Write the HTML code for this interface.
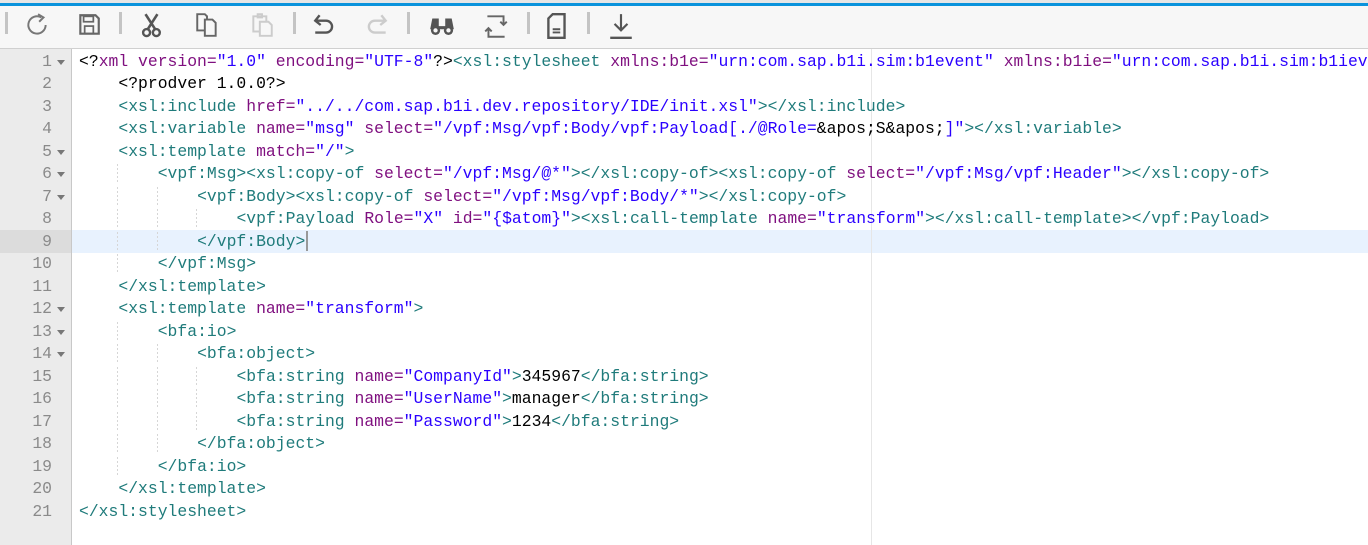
<!DOCTYPE html>
<html><head><meta charset="utf-8">
<style>
html,body{margin:0;padding:0;width:1368px;height:545px;overflow:hidden;background:#fff;font-family:"Liberation Sans",sans-serif}
#tb{position:absolute;left:0;top:0;width:1368px;height:48px;background:#f7f7f7;border-bottom:1px solid #d0d0d0}
#tb .blue{position:absolute;left:0;top:3px;width:1368px;height:3px;background:#0a93dc}
#tb .top{position:absolute;left:0;top:0;width:1368px;height:3px;background:#e6e6e6}
.sep{position:absolute;top:12px;width:3px;height:22px;background:#c4c4c4}
.ic{position:absolute;top:12px}
#gut{position:absolute;left:0;top:49px;width:71px;height:496px;background:#ebebeb;border-right:1px solid #c8c8c8}
.pm{position:absolute;left:871px;top:49px;width:1px;height:496px;background:#e6e6e6}
.ln,.cl{position:absolute;height:22.5px;line-height:22.5px;font-family:"Liberation Mono",monospace;font-size:16.4px;white-space:pre}
.ln{left:0;width:52px;text-align:right;color:#8a8a8a}
.fold{position:absolute;left:57px;width:0;height:0;border-left:4px solid transparent;border-right:4px solid transparent;border-top:5px solid #777}
.cl{left:79px;color:#000}
.t{color:#1f7b7b}.a{color:#7f0f7f}.s{color:#2a00ff}
i{font-style:normal;background:repeating-linear-gradient(to bottom,#d6d6d6 0 2px,transparent 2px 4px) right/1px 100% no-repeat}
i.n{background:none}
</style></head><body>
<div id="tb">
<div class="top"></div><div class="blue"></div>
<div class="sep" style="left:5px"></div>
<div class="sep" style="left:119px"></div>
<div class="sep" style="left:293px"></div>
<div class="sep" style="left:407px"></div>
<div class="sep" style="left:527px"></div>
<div class="sep" style="left:587px"></div>
<svg class="ic" style="left:25px" width="24" height="26" viewBox="0 0 22 24"><path d="M15 5 A8 8 0 1 0 19 12" fill="none" stroke="#777" stroke-width="1.8"/><path d="M12 2 L17 5 L13 9" fill="none" stroke="#777" stroke-width="1.8"/></svg>
<svg class="ic" style="left:77px" width="24" height="26" viewBox="0 0 22 24"><path d="M3 3 H17 L20 6 V20 H3 Z" fill="none" stroke="#666" stroke-width="2"/><rect x="6" y="4" width="9" height="5" fill="none" stroke="#666" stroke-width="1.6"/><rect x="7" y="13" width="8" height="7" fill="none" stroke="#666" stroke-width="1.6"/></svg>
<svg class="ic" style="left:139px" width="26" height="26" viewBox="0 0 24 24"><path d="M6 2 L15 16 M17 2 L8 16" stroke="#555" stroke-width="2.4"/><circle cx="7" cy="19" r="3.2" fill="none" stroke="#555" stroke-width="2.2"/><circle cx="16" cy="19" r="3.2" fill="none" stroke="#555" stroke-width="2.2"/></svg>
<svg class="ic" style="left:194px" width="26" height="26" viewBox="0 0 24 24"><path d="M3 2 H10 L12 4 V17 H3 Z" fill="none" stroke="#666" stroke-width="1.8"/><path d="M10 7 H17 L20 10 V22 H10 Z" fill="#f7f7f7" stroke="#666" stroke-width="1.8"/></svg>
<svg class="ic" style="left:249px" width="26" height="26" viewBox="0 0 24 24"><path d="M4 4 H16 V18 H4 Z M8 2 H12 V5 H8 Z" fill="none" stroke="#ccc" stroke-width="1.8"/><path d="M10 9 H18 L21 12 V22 H10 Z" fill="#f7f7f7" stroke="#ccc" stroke-width="1.8"/></svg>
<svg class="ic" style="left:312px" width="26" height="26" viewBox="0 0 24 24"><path d="M7 3 L3 8 L8 12" fill="none" stroke="#555" stroke-width="2.2"/><path d="M3 8 H13 A5.5 5.5 0 0 1 13 19 H3" fill="none" stroke="#555" stroke-width="2.2"/></svg>
<svg class="ic" style="left:364px" width="26" height="26" viewBox="0 0 24 24"><path d="M16 3 L20 8 L15 12" fill="none" stroke="#ccc" stroke-width="2.2"/><path d="M20 8 H10 A5.5 5.5 0 0 0 10 19 H20" fill="none" stroke="#ccc" stroke-width="2.2"/></svg>
<svg class="ic" style="left:428px" width="28" height="26" viewBox="0 0 26 24"><path d="M4 6 H10 V13 H16 V6 H22 L24 16 H2 Z" fill="#555"/><circle cx="7" cy="17" r="4.3" fill="#555"/><circle cx="19" cy="17" r="4.3" fill="#555"/><circle cx="7" cy="17" r="2" fill="#f7f7f7"/><circle cx="19" cy="17" r="2" fill="#f7f7f7"/></svg>
<svg class="ic" style="left:482px" width="28" height="28" viewBox="0 0 26 26"><path d="M5 4 H20 V12 M17 9 L20 12 L23 9" fill="none" stroke="#666" stroke-width="1.8"/><path d="M21 23 H6 V15 M3 18 L6 15 L9 18" fill="none" stroke="#666" stroke-width="1.8"/></svg>
<svg class="ic" style="left:545px" width="24" height="28" viewBox="0 0 22 26"><path d="M7 2 H18 V24 H3 V6 Z" fill="none" stroke="#555" stroke-width="2.2"/><path d="M7 16 H14 M7 19 H14" stroke="#555" stroke-width="1.8"/></svg>
<svg class="ic" style="left:608px" width="26" height="28" viewBox="0 0 24 26"><path d="M12 2 V17 M6 11 L12 17 L18 11" fill="none" stroke="#555" stroke-width="2"/><path d="M2 24 H22" stroke="#555" stroke-width="2.2"/></svg>
</div>
<div id="gut"></div>
<div style="position:absolute;left:0;top:230px;width:71px;height:22.5px;background:#dcdcdc"></div>
<div style="position:absolute;left:72px;top:230px;width:1296px;height:22.5px;background:#e8f2fe"></div>
<div class="pm"></div>
<div style="position:absolute;left:306px;top:231px;width:2px;height:20px;background:#999"></div>
<div style="position:absolute;left:0;top:50.5px">
<div class="ln" style="top:0">1</div><div class="fold" style="top:9px"></div>
<div class="ln" style="top:22.5px">2</div>
<div class="ln" style="top:45px">3</div>
<div class="ln" style="top:67.5px">4</div>
<div class="ln" style="top:90px">5</div><div class="fold" style="top:99px"></div>
<div class="ln" style="top:112.5px">6</div><div class="fold" style="top:121.5px"></div>
<div class="ln" style="top:135px">7</div><div class="fold" style="top:144px"></div>
<div class="ln" style="top:157.5px">8</div>
<div class="ln" style="top:180px">9</div>
<div class="ln" style="top:202.5px">10</div>
<div class="ln" style="top:225px">11</div>
<div class="ln" style="top:247.5px">12</div><div class="fold" style="top:256.5px"></div>
<div class="ln" style="top:270px">13</div><div class="fold" style="top:279px"></div>
<div class="ln" style="top:292.5px">14</div><div class="fold" style="top:301.5px"></div>
<div class="ln" style="top:315px">15</div>
<div class="ln" style="top:337.5px">16</div>
<div class="ln" style="top:360px">17</div>
<div class="ln" style="top:382.5px">18</div>
<div class="ln" style="top:405px">19</div>
<div class="ln" style="top:427.5px">20</div>
<div class="ln" style="top:450px">21</div>

<div class="cl" style="top:0">&lt;?<span class="a">xml version=</span><span class="s">"1.0"</span> <span class="a">encoding=</span><span class="s">"UTF-8"</span>?&gt;<span class="t">&lt;xsl:stylesheet</span> <span class="a">xmlns:b1e=</span><span class="s">"urn:com.sap.b1i.sim:b1event"</span> <span class="a">xmlns:b1ie=</span><span class="s">"urn:com.sap.b1i.sim:b1ievent"</span></div>
<div class="cl" style="top:22.5px"><i class="n">    </i>&lt;?prodver 1.0.0?&gt;</div>
<div class="cl" style="top:45px"><i class="n">    </i><span class="t">&lt;xsl:include</span> <span class="a">href=</span><span class="s">"../../com.sap.b1i.dev.repository/IDE/init.xsl"</span><span class="t">&gt;&lt;/xsl:include&gt;</span></div>
<div class="cl" style="top:67.5px"><i class="n">    </i><span class="t">&lt;xsl:variable</span> <span class="a">name=</span><span class="s">"msg"</span> <span class="a">select=</span><span class="s">"/vpf:Msg/vpf:Body/vpf:Payload[./@Role=</span>&amp;apos;S&amp;apos;<span class="s">]"</span><span class="t">&gt;&lt;/xsl:variable&gt;</span></div>
<div class="cl" style="top:90px"><i class="n">    </i><span class="t">&lt;xsl:template</span> <span class="a">match=</span><span class="s">"/"</span><span class="t">&gt;</span></div>
<div class="cl" style="top:112.5px"><i>    </i><i class="n">    </i><span class="t">&lt;vpf:Msg&gt;&lt;xsl:copy-of</span> <span class="a">select=</span><span class="s">"/vpf:Msg/@*"</span><span class="t">&gt;&lt;/xsl:copy-of&gt;&lt;xsl:copy-of</span> <span class="a">select=</span><span class="s">"/vpf:Msg/vpf:Header"</span><span class="t">&gt;&lt;/xsl:copy-of&gt;</span></div>
<div class="cl" style="top:135px"><i>    </i><i>    </i><i class="n">    </i><span class="t">&lt;vpf:Body&gt;&lt;xsl:copy-of</span> <span class="a">select=</span><span class="s">"/vpf:Msg/vpf:Body/*"</span><span class="t">&gt;&lt;/xsl:copy-of&gt;</span></div>
<div class="cl" style="top:157.5px"><i>    </i><i>    </i><i>    </i><i class="n">    </i><span class="t">&lt;vpf:Payload</span> <span class="a">Role=</span><span class="s">"X"</span> <span class="a">id=</span><span class="s">"{$atom}"</span><span class="t">&gt;&lt;xsl:call-template</span> <span class="a">name=</span><span class="s">"transform"</span><span class="t">&gt;&lt;/xsl:call-template&gt;&lt;/vpf:Payload&gt;</span></div>
<div class="cl" style="top:180px"><i>    </i><i>    </i><i class="n">    </i><span class="t">&lt;/vpf:Body&gt;</span></div>
<div class="cl" style="top:202.5px"><i>    </i><i class="n">    </i><span class="t">&lt;/vpf:Msg&gt;</span></div>
<div class="cl" style="top:225px"><i class="n">    </i><span class="t">&lt;/xsl:template&gt;</span></div>
<div class="cl" style="top:247.5px"><i class="n">    </i><span class="t">&lt;xsl:template</span> <span class="a">name=</span><span class="s">"transform"</span><span class="t">&gt;</span></div>
<div class="cl" style="top:270px"><i>    </i><i class="n">    </i><span class="t">&lt;bfa:io&gt;</span></div>
<div class="cl" style="top:292.5px"><i>    </i><i>    </i><i class="n">    </i><span class="t">&lt;bfa:object&gt;</span></div>
<div class="cl" style="top:315px"><i>    </i><i>    </i><i>    </i><i class="n">    </i><span class="t">&lt;bfa:string</span> <span class="a">name=</span><span class="s">"CompanyId"</span><span class="t">&gt;</span>345967<span class="t">&lt;/bfa:string&gt;</span></div>
<div class="cl" style="top:337.5px"><i>    </i><i>    </i><i>    </i><i class="n">    </i><span class="t">&lt;bfa:string</span> <span class="a">name=</span><span class="s">"UserName"</span><span class="t">&gt;</span>manager<span class="t">&lt;/bfa:string&gt;</span></div>
<div class="cl" style="top:360px"><i>    </i><i>    </i><i>    </i><i class="n">    </i><span class="t">&lt;bfa:string</span> <span class="a">name=</span><span class="s">"Password"</span><span class="t">&gt;</span>1234<span class="t">&lt;/bfa:string&gt;</span></div>
<div class="cl" style="top:382.5px"><i>    </i><i>    </i><i class="n">    </i><span class="t">&lt;/bfa:object&gt;</span></div>
<div class="cl" style="top:405px"><i>    </i><i class="n">    </i><span class="t">&lt;/bfa:io&gt;</span></div>
<div class="cl" style="top:427.5px"><i class="n">    </i><span class="t">&lt;/xsl:template&gt;</span></div>
<div class="cl" style="top:450px"><span class="t">&lt;/xsl:stylesheet&gt;</span></div>
</div>
</body></html>
